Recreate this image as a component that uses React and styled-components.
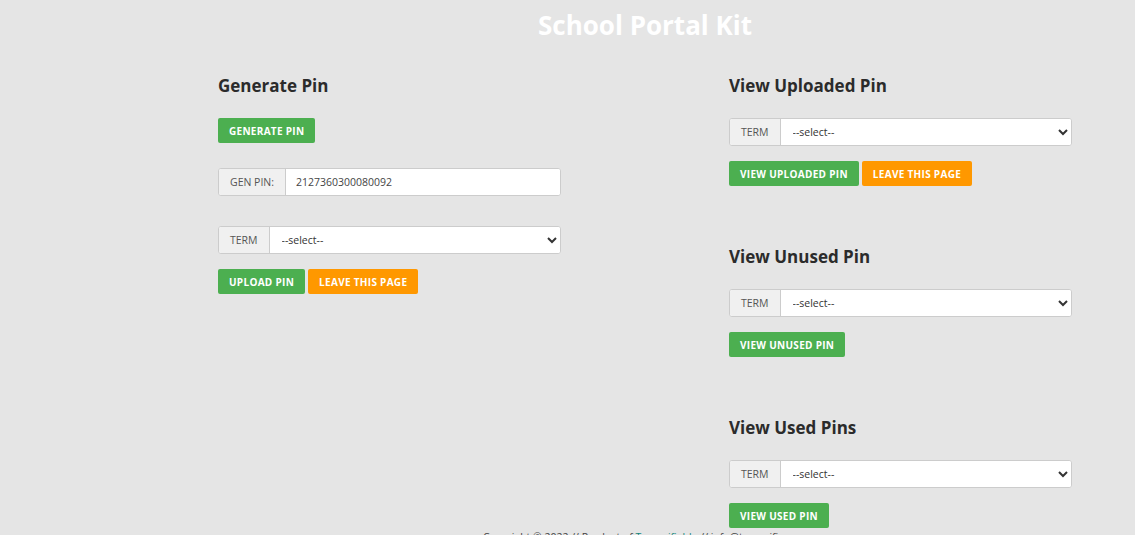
import React, { useState } from "react";
import styled, { createGlobalStyle } from "styled-components";

const GlobalStyle = createGlobalStyle`
  html, body {
    margin: 0;
    padding: 0;
    background: #e5e5e5;
    font-family: "Open Sans", "Noto Sans", Arial, sans-serif;
    color: #333;
  }
  * { box-sizing: border-box; }
`;

const terms = ["--select--", "First Term", "Second Term", "Third Term"];

function TermSelect() {
  return (
    <InputGroup>
      <Addon>TERM</Addon>
      <Select defaultValue="--select--">
        {terms.map((t) => (
          <option key={t}>{t}</option>
        ))}
      </Select>
    </InputGroup>
  );
}

export default function App() {
  const [pin] = useState("2127360300080092");

  return (
    <Page>
      <GlobalStyle />
      <Header>
        <Title>School Portal Kit</Title>
      </Header>
      <Main>
        <Column>
          <Section>
            <Heading>Generate Pin</Heading>
            <ButtonRow $first>
              <Button>Generate Pin</Button>
            </ButtonRow>
            <InputGroup>
              <Addon>GEN PIN:</Addon>
              <TextInput value={pin} readOnly />
            </InputGroup>
            <Spacer />
            <TermSelect />
            <ButtonRow>
              <Button>Upload Pin</Button>
              <Button $orange>Leave this page</Button>
            </ButtonRow>
          </Section>
        </Column>
        <Column $grow>
          <Section>
            <Heading>View Uploaded Pin</Heading>
            <TermSelect />
            <ButtonRow>
              <Button>View Uploaded Pin</Button>
              <Button $orange>Leave this page</Button>
            </ButtonRow>
          </Section>
          <Section>
            <Heading>View Unused Pin</Heading>
            <TermSelect />
            <ButtonRow>
              <Button>View Unused Pin</Button>
            </ButtonRow>
          </Section>
          <Section>
            <Heading>View Used Pins</Heading>
            <TermSelect />
            <ButtonRow>
              <Button>View Used Pin</Button>
            </ButtonRow>
          </Section>
        </Column>
      </Main>
      <Footer>
        Copyright © 2022 // Product of <Link>Transcifiable</Link> // info@transcifi.com
      </Footer>
    </Page>
  );
}

const Page = styled.div`
  width: 100%;
  min-height: 100vh;
  overflow-x: hidden;
`;

const Header = styled.div`
  height: 50px;
  display: flex;
  align-items: center;
  justify-content: center;
  padding-left: 155px;
`;

const Title = styled.h1`
  margin: 0;
  color: #fff;
  font-size: 26px;
  font-weight: 700;
  line-height: 1;
`;

const Main = styled.div`
  display: flex;
  padding-left: 218px;
`;

const Column = styled.div`
  flex: ${(p) => (p.$grow ? "1 1 0" : "none")};
  width: ${(p) => (p.$grow ? "auto" : "511px")};
  min-width: 0;
  display: flex;
  flex-direction: column;
  gap: 35px;
`;

const Section = styled.div`
  width: 343px;
  display: flex;
  flex-direction: column;
`;

const Heading = styled.h2`
  margin: 24px 0 20px;
  font-size: 17px;
  font-weight: 700;
  line-height: 24px;
  color: #2b2b2b;
`;

const ButtonRow = styled.div`
  display: flex;
  gap: 3px;
  margin: ${(p) => (p.$first ? "0 0 25px" : "15px 0 0")};
`;

const Button = styled.button`
  height: 25px;
  padding: 0 11px;
  border: none;
  border-radius: 2px;
  background: ${(p) => (p.$orange ? "#ff9800" : "#4caf50")};
  color: #fff;
  font-family: inherit;
  font-size: 10px;
  font-weight: 700;
  letter-spacing: 0.3px;
  text-transform: uppercase;
  cursor: pointer;
`;

const InputGroup = styled.div`
  display: flex;
  height: 28px;
  width: 100%;
  border: 1px solid #ccc;
  border-radius: 3px;
  background: #fff;
  overflow: hidden;
`;

const Addon = styled.span`
  display: flex;
  align-items: center;
  padding: 0 11px;
  background: #f0f0f0;
  border-right: 1px solid #ccc;
  font-size: 10.5px;
  color: #555;
`;

const TextInput = styled.input`
  flex: 1;
  border: none;
  outline: none;
  padding: 0 10px;
  font-family: inherit;
  font-size: 10.5px;
  color: #444;
  background: #fff;
`;

const Select = styled.select`
  flex: 1;
  border: none;
  outline: none;
  padding: 0 8px;
  font-family: inherit;
  font-size: 10.5px;
  color: #333;
  background: #fff;
`;

const Spacer = styled.div`
  height: 30px;
`;

const Footer = styled.div`
  text-align: center;
  font-size: 10.5px;
  color: #444;
  padding: 2px 0 6px 150px;
`;

const Link = styled.span`
  color: #15857a;
`;
